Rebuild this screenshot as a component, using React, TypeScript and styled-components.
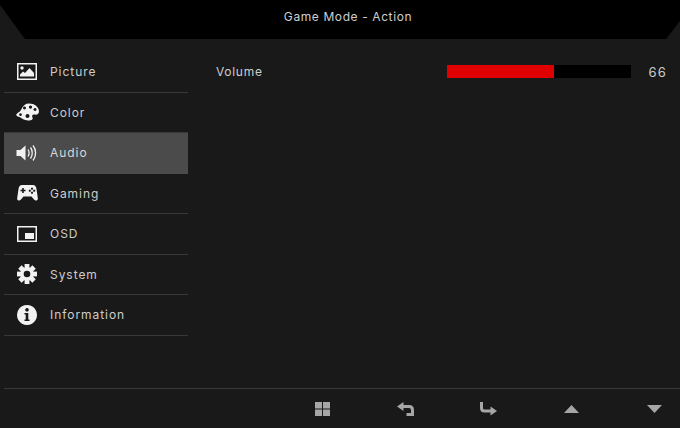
import { ReactElement, ReactNode } from 'react'
import styled, { createGlobalStyle } from 'styled-components'

const GlobalStyle = createGlobalStyle`
  html, body {
    margin: 0;
    padding: 0;
    background: #191919;
  }
`

const Screen = styled.div`
  width: 680px;
  height: 428px;
  display: flex;
  flex-direction: column;
  overflow: hidden;
  background: #191919;
  color: #d4d4d4;
  font-family: 'Inter', 'Liberation Sans', sans-serif;
`

const Header = styled.header`
  height: 39px;
  flex: none;
  display: flex;
  align-items: center;
  justify-content: center;
  padding: 0 0 6px 16px;
  box-sizing: border-box;
  background: #000;
  clip-path: polygon(0 5px, 0 0, 680px 0, 680px 21px, 666px 39px, 25px 39px);
  font-size: 12px;
  letter-spacing: 0.6px;
  color: #cfcfcf;
`

const Body = styled.main`
  flex: 1;
  display: flex;
  padding: 13px 13px 0 4px;
`

const Menu = styled.nav`
  width: 184px;
  flex: none;
  display: flex;
  flex-direction: column;
`

const MenuRow = styled.div<{ $active?: boolean }>`
  height: 40.5px;
  box-sizing: border-box;
  display: flex;
  align-items: center;
  gap: 11px;
  padding-left: 11px;
  font-size: 12px;
  letter-spacing: 0.95px;
  color: ${(p) => (p.$active ? '#d8d8d8' : '#cdcdcd')};
  background: ${(p) => (p.$active ? '#4b4b4b' : 'transparent')};
  border-bottom: 1px solid ${(p) => (p.$active ? '#4b4b4b' : '#383838')};
`

const IconBox = styled.span`
  width: 24px;
  height: 24px;
  flex: none;
  display: flex;
  align-items: center;
  justify-content: center;
  color: #f2f2f2;
`

const Content = styled.section`
  flex: 1;
  padding-left: 28px;
`

const SettingRow = styled.div`
  height: 39px;
  display: flex;
  align-items: center;
  font-size: 12px;
  letter-spacing: 0.7px;
  color: #cdcdcd;
`

const SettingLabel = styled.span`
  width: 231px;
  flex: none;
`

const Track = styled.div`
  width: 184px;
  height: 13px;
  flex: none;
  background: #000;
`

const Fill = styled.div`
  height: 100%;
  background: #e00000;
`

const SettingValue = styled.span`
  margin-left: auto;
  font-size: 13px;
  letter-spacing: 1.2px;
`

const Footer = styled.footer`
  height: 40px;
  flex: none;
  box-sizing: border-box;
  margin-left: 4px;
  border-top: 1px solid #383838;
  display: flex;
  align-items: center;
  justify-content: flex-end;
  gap: 59px;
  padding-right: 14px;
  color: #a6a6a6;
`

const FooterButton = styled.span`
  width: 24px;
  height: 24px;
  display: flex;
  align-items: center;
  justify-content: center;
`

const PictureIcon = (): ReactElement => (
  <svg width="20" height="17" viewBox="0 0 20 17" fill="none">
    <rect x="0.75" y="0.75" width="18.5" height="15.5" stroke="currentColor" strokeWidth="1.5" />
    <circle cx="5" cy="5" r="1.7" fill="currentColor" />
    <path d="M3 13.5 L3 11.5 L6 8.5 L8 10 L12.5 5 L17 10 L17 13.5 Z" fill="currentColor" />
  </svg>
)

const ColorIcon = (): ReactElement => (
  <svg width="23" height="18" viewBox="0 0 23 18">
    <path
      fillRule="evenodd"
      fill="currentColor"
      d="M13 0.5 C18.5 0.5 23 4 23 8.5 C23 11 21 12 18.5 11.5 C16.5 11 15.5 12.5 16.5 14.5 C17.5 16.5 15 17.8 12 17.5 C8 17.2 5.5 15.5 4.5 14.5 C3 13.5 0.5 13.5 0.3 12 C0.2 10 4 9.5 5.5 6 C7 2.5 9.5 0.5 13 0.5 Z
         M8.5 3.5 a1.5 1.5 0 1 0 0.01 0 Z M14.5 2.5 a1.6 1.6 0 1 0 0.01 0 Z M19 5 a1.5 1.5 0 1 0 0.01 0 Z M4.5 10.2 a1.4 1.4 0 1 0 0.01 0 Z M11.5 11 a2 2 0 1 0 0.01 0 Z"
    />
  </svg>
)

const AudioIcon = (): ReactElement => (
  <svg width="22" height="18" viewBox="0 0 22 18" fill="none">
    <path d="M0.5 6 H4.5 L9.5 1.5 V16.5 L4.5 12 H0.5 Z" fill="currentColor" />
    <path d="M12 5.5 C13.3 7.5 13.3 10.5 12 12.5" stroke="currentColor" strokeWidth="1.3" />
    <path d="M14.5 3.5 C16.8 6.5 16.8 11.5 14.5 14.5" stroke="currentColor" strokeWidth="1.3" />
    <path d="M17 1.5 C20.4 5.5 20.4 12.5 17 16.5" stroke="currentColor" strokeWidth="1.3" />
  </svg>
)

const GamingIcon = (): ReactElement => (
  <svg width="21" height="18" viewBox="0 0 21 18">
    <path
      fillRule="evenodd"
      fill="currentColor"
      d="M5 1 H16 C18 1 19 2.5 19.5 5 L20.8 14 C21.1 16.5 18.8 17.5 17 15.5 L14.5 12.5 H6.5 L4 15.5 C2.2 17.5 -0.1 16.5 0.2 14 L1.5 5 C2 2.5 3 1 5 1 Z
         M5.2 4 V5.7 H3.5 V7.3 H5.2 V9 H6.8 V7.3 H8.5 V5.7 H6.8 V4 Z
         M15 3.6 a1.1 1.1 0 1 0 0.01 0 Z M12.8 5.6 a1.1 1.1 0 1 0 0.01 0 Z M17.2 5.6 a1.1 1.1 0 1 0 0.01 0 Z M15 7.6 a1.1 1.1 0 1 0 0.01 0 Z"
    />
  </svg>
)

const OsdIcon = (): ReactElement => (
  <svg width="20" height="16" viewBox="0 0 20 16" fill="none">
    <rect x="0.75" y="0.75" width="18.5" height="14.5" stroke="currentColor" strokeWidth="1.5" />
    <rect x="8" y="7" width="9" height="6" fill="currentColor" />
  </svg>
)

const teeth = [0, 45, 90, 135, 180, 225, 270, 315]

const SystemIcon = (): ReactElement => (
  <svg width="20" height="20" viewBox="0 0 20 20">
    {teeth.map((a) => (
      <rect key={a} x="7.6" y="0" width="4.8" height="5" fill="currentColor" transform={`rotate(${a} 10 10)`} />
    ))}
    <circle cx="10" cy="10" r="5" fill="none" stroke="currentColor" strokeWidth="3.4" />
  </svg>
)

const InfoIcon = (): ReactElement => (
  <svg width="20" height="20" viewBox="0 0 20 20">
    <path
      fillRule="evenodd"
      fill="currentColor"
      d="M10 0 a10 10 0 1 0 0.01 0 Z M10 3 a1.8 1.8 0 1 0 0.01 0 Z M7.5 8 V9.5 H8.7 V14.5 H7.5 V16 H12.5 V14.5 H11.3 V8 Z"
    />
  </svg>
)

const GridIcon = (): ReactElement => (
  <svg width="15" height="14" viewBox="0 0 15 14" fill="currentColor">
    <rect x="0" y="0" width="7" height="6.5" />
    <rect x="8" y="0" width="7" height="6.5" />
    <rect x="0" y="7.5" width="7" height="6.5" />
    <rect x="8" y="7.5" width="7" height="6.5" />
  </svg>
)

const BackIcon = (): ReactElement => (
  <svg width="17" height="14" viewBox="0 0 17 14" fill="none">
    <path d="M0 4.5 L6.5 0 V9 Z" fill="currentColor" />
    <path d="M5 4.5 H12 C14.5 4.5 15.5 6 15.5 8 V12.5 H9.5" stroke="currentColor" strokeWidth="3" />
  </svg>
)

const EnterIcon = (): ReactElement => (
  <svg width="17" height="14" viewBox="0 0 17 14" fill="none">
    <path d="M1.5 0 V6 C1.5 8 2.5 9 4.5 9 H12" stroke="currentColor" strokeWidth="3" />
    <path d="M17 9 L10.5 4.5 V13.5 Z" fill="currentColor" />
  </svg>
)

const UpIcon = (): ReactElement => (
  <svg width="15" height="8" viewBox="0 0 15 8" fill="currentColor">
    <path d="M7.5 0 L15 8 H0 Z" />
  </svg>
)

const DownIcon = (): ReactElement => (
  <svg width="15" height="8" viewBox="0 0 15 8" fill="currentColor">
    <path d="M0 0 H15 L7.5 8 Z" />
  </svg>
)

const menuItems: { label: string; icon: ReactNode; active?: boolean }[] = [
  { label: 'Picture', icon: <PictureIcon /> },
  { label: 'Color', icon: <ColorIcon /> },
  { label: 'Audio', icon: <AudioIcon />, active: true },
  { label: 'Gaming', icon: <GamingIcon /> },
  { label: 'OSD', icon: <OsdIcon /> },
  { label: 'System', icon: <SystemIcon /> },
  { label: 'Information', icon: <InfoIcon /> }
]

const footerIcons = [<GridIcon />, <BackIcon />, <EnterIcon />, <UpIcon />, <DownIcon />]

const App = (): ReactElement => {
  const volume = 58
  return (
    <Screen>
      <GlobalStyle />
      <Header>Game Mode - Action</Header>
      <Body>
        <Menu>
          {menuItems.map((item) => (
            <MenuRow key={item.label} $active={item.active}>
              <IconBox>{item.icon}</IconBox>
              {item.label}
            </MenuRow>
          ))}
        </Menu>
        <Content>
          <SettingRow>
            <SettingLabel>Volume</SettingLabel>
            <Track>
              <Fill style={{ width: `${volume}%` }} />
            </Track>
            <SettingValue>66</SettingValue>
          </SettingRow>
        </Content>
      </Body>
      <Footer>
        {footerIcons.map((icon, i) => (
          <FooterButton key={i}>{icon}</FooterButton>
        ))}
      </Footer>
    </Screen>
  )
}

export default App
